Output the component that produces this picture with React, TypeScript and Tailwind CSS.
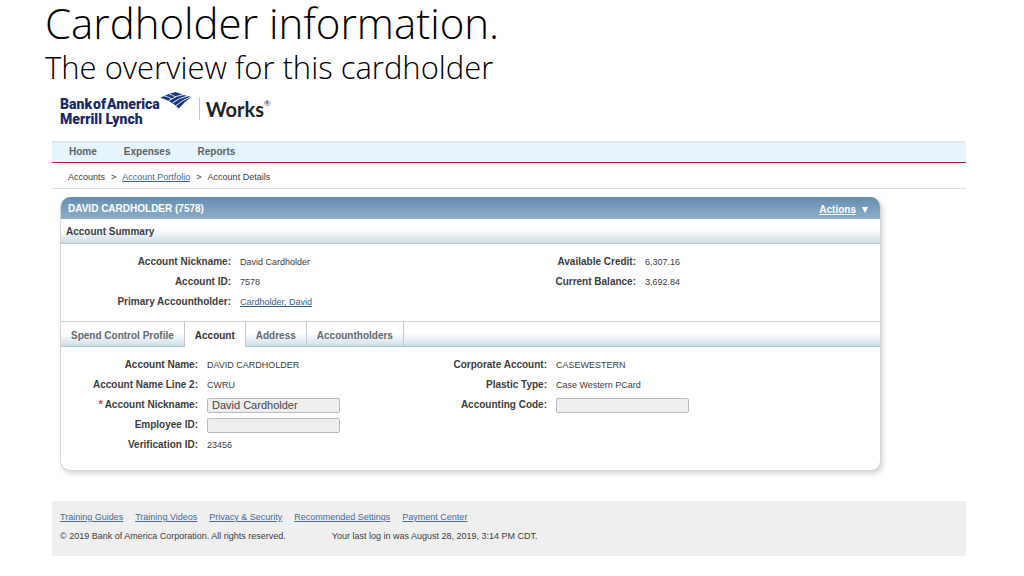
import type { ReactNode } from "react";

const sans = "font-['Liberation_Sans',Arial,sans-serif]";

function Field({ label, children }: { label: string; children: ReactNode }) {
  return (
    <div className="flex h-5 items-center gap-[9px]">
      <dt className="flex-1 text-right font-bold whitespace-nowrap">{label}</dt>
      <dd className="w-[133px] text-[9px] whitespace-nowrap">{children}</dd>
    </div>
  );
}

function InputField({ id, label, value, required }: { id: string; label: string; value: string; required?: boolean }) {
  return (
    <div className="flex h-5 items-center gap-[9px]">
      <label htmlFor={id} className="flex-1 text-right font-bold whitespace-nowrap">
        {required && <span className="mr-0.5 text-[#e02a2a]">*</span>}
        {label}
      </label>
      <input
        id={id}
        defaultValue={value}
        className="h-[15px] w-[133px] rounded-[2px] border border-[#b4bcc0] bg-[#eeeeee] px-1 text-[11px] leading-3 text-[#444]"
      />
    </div>
  );
}

function FlagMark() {
  return (
    <svg viewBox="0 0 32 17" className="h-[17px] w-8" aria-hidden="true">
      <path d="M0.3 5.8 Q8 1.6 15.5 0.1 Q22 3 31.7 5 Q24.5 9.5 18.8 16.4 Q11 9 0.3 5.8Z" fill="#17397f" />
      <g fill="none" stroke="#fff">
        <path d="M4 3.8 Q8 4.8 12 7" strokeWidth="0.8" />
        <path d="M8.8 2 Q12.5 3 16 5" strokeWidth="0.8" />
        <path d="M8.6 8.8 Q16 3.2 24 2.6" strokeWidth="0.9" />
        <path d="M12.6 11 Q19 5.6 28 3.8" strokeWidth="0.9" />
        <path d="M15.8 13.8 Q22 8 31 4.8" strokeWidth="0.9" />
      </g>
    </svg>
  );
}

const tabs = ["Spend Control Profile", "Account", "Address", "Accountholders"];
const footerLinks = ["Training Guides", "Training Videos", "Privacy & Security", "Recommended Settings", "Payment Center"];

export default function App() {
  return (
    <main className={`${sans} min-h-screen bg-white pb-5 text-[10px] leading-[14px] text-[#3c3c3c]`}>
      <header className="px-[45px] font-['Open_Sans','Noto_Sans',sans-serif] font-light text-black">
        <h1 className="text-[42px] leading-[46px] whitespace-nowrap">Cardholder information.</h1>
        <p className="text-[31px] leading-[43px] whitespace-nowrap">The overview for this cardholder</p>
      </header>

      <div className="mr-[58px] ml-[52px]">
        <div className="flex h-[52px] items-start pl-2">
          <div className="pt-2 font-['Roboto',sans-serif] text-[14px] leading-[15px] font-black whitespace-nowrap text-[#17296b]">
            <div className="flex gap-px">
              <span>Bank</span> <span>of</span> <span>America</span>
            </div>
            <div>Merrill Lynch</div>
          </div>
          <div className="pt-[3px]">
            <FlagMark />
          </div>
          <div className="mt-2 ml-[7px] h-[23px] border-l border-[#c8c8c8]" />
          <div className="flex pt-[9px] pl-1.5 font-['Lato',sans-serif] text-[20px] leading-[22px] font-bold text-[#222]">
            Works<span className="text-[8px] leading-[10px] font-normal">®</span>
          </div>
        </div>

        <nav className="flex h-[22px] items-center gap-[27px] border-t-2 border-b border-t-[#dce8ea] border-b-[#a8243c] bg-[#e6f4fd] pb-0.5 pl-[17px] font-bold">
          {["Home", "Expenses", "Reports"].map((item) => (
            <a key={item} href="#" className="text-[#5b6266]">
              {item}
            </a>
          ))}
        </nav>

        <div className="flex h-[26px] items-center gap-1.5 border-b border-[#dcdfe0] pt-[3px] pl-4 text-[9px] whitespace-nowrap">
          <span>Accounts</span>
          <span>&gt;</span>
          <a href="#" className="text-[#3f6796] underline">
            Account Portfolio
          </a>
          <span>&gt;</span>
          <span>Account Details</span>
        </div>

        <section className="mt-2 mr-[85px] ml-2 overflow-hidden rounded-[10px] border border-t-0 border-[#d3d6d8] bg-white shadow-[2px_3px_5px_rgba(0,0,0,0.16)]">
          <div className="flex h-[22px] items-center justify-between bg-linear-to-b from-[#638db2] to-[#8dafc8] pt-0.5 pr-3 pl-[7px] font-bold text-white">
            <h2>DAVID CARDHOLDER (7578)</h2>
            <button className="flex items-center gap-1.5 pt-px font-bold">
              <span className="underline">Actions</span>
              <svg viewBox="0 0 6 6" className="size-1.5" aria-hidden="true">
                <path d="M0 0H6L3 6Z" fill="#fff" />
              </svg>
            </button>
          </div>
          <div className="flex h-[25px] items-center border-b border-[#b9c9d1] bg-linear-to-b from-white from-45% to-[#cddbe3] pt-0.5 pl-[5px]">
            <h3 className="font-bold">Account Summary</h3>
          </div>

          <dl className="flex pt-2 pb-[9px]">
            <div className="w-[312px]">
              <Field label="Account Nickname:">David Cardholder</Field>
              <Field label="Account ID:">7578</Field>
              <Field label="Primary Accountholder:">
                <a href="#" className="text-[#33628f] underline">
                  Cardholder, David
                </a>
              </Field>
            </div>
            <div className="w-[405px]">
              <Field label="Available Credit:">6,307.16</Field>
              <Field label="Current Balance:">3,692.84</Field>
            </div>
          </dl>

          <div role="tablist" className="flex h-[26px] border-t border-[#cdd3d6] bg-linear-to-b from-white from-45% to-[#cadde6]">
            {tabs.map((tab) => (
              <button
                key={tab}
                role="tab"
                aria-selected={tab === "Account"}
                className="border-r border-b border-r-[#bfcad0] border-b-[#a9c3d3] px-[10px] pt-1 font-bold whitespace-nowrap text-[#62696d] aria-selected:border-b-white aria-selected:bg-white aria-selected:text-[#333]"
              >
                {tab}
              </button>
            ))}
            <div className="flex-1 border-b border-[#a9c3d3]" />
          </div>

          <dl className="flex pt-2 pb-[15px]">
            <div className="w-[279px]">
              <Field label="Account Name:">DAVID CARDHOLDER</Field>
              <Field label="Account Name Line 2:">CWRU</Field>
              <InputField id="nickname" label="Account Nickname:" value="David Cardholder" required />
              <InputField id="employee" label="Employee ID:" value="" />
              <Field label="Verification ID:">23456</Field>
            </div>
            <div className="w-[349px]">
              <Field label="Corporate Account:">CASEWESTERN</Field>
              <Field label="Plastic Type:">Case Western PCard</Field>
              <InputField id="code" label="Accounting Code:" value="" />
            </div>
          </dl>
        </section>

        <footer className="mt-[30px] bg-[#efefef] px-2 pt-[9px] pb-[13px] text-[9px]">
          <div className="flex gap-3 whitespace-nowrap">
            {footerLinks.map((link) => (
              <a key={link} href="#" className="text-[#456a93] underline">
                {link}
              </a>
            ))}
          </div>
          <div className="flex gap-[46px] pt-[5px] whitespace-nowrap">
            <span>© 2019 Bank of America Corporation. All rights reserved.</span>
            <span>Your last log in was August 28, 2019, 3:14 PM CDT.</span>
          </div>
        </footer>
      </div>
    </main>
  );
}
